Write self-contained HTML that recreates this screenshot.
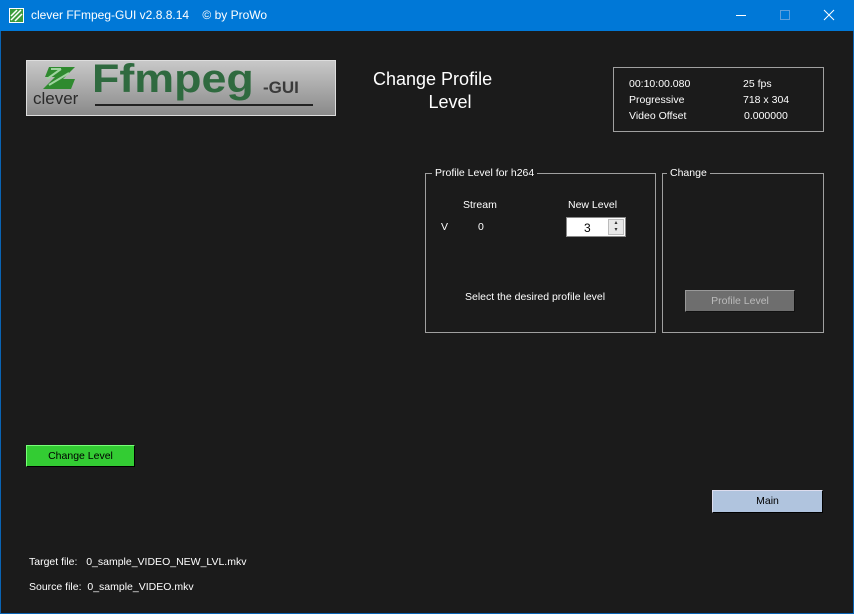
<!DOCTYPE html>
<html><head><style>
*{margin:0;padding:0;box-sizing:border-box}
body{width:854px;height:614px;background:#0a64b4;font-family:"Liberation Sans",sans-serif;font-size:10.5px;color:#fff;position:relative;overflow:hidden}
.t{position:absolute;white-space:nowrap}
#title{position:absolute;left:0;top:0;width:854px;height:31px;background:#0078d7}
#main{position:absolute;left:1px;top:31px;width:852px;height:582px;background:#1b1b1b}
.box{position:absolute;border:1px solid #a0a0a0}
.lg{position:absolute;background:#1b1b1b;padding:0 3px;top:-7px;left:6px}
.btn{position:absolute;text-align:center}
</style></head><body>
<div id="title">
 <svg style="position:absolute;left:9px;top:8px" width="15" height="15"><rect x="0.5" y="0.5" width="14" height="14" fill="#3c9c3c" stroke="#fff"/><path d="M2 8L8 2M2 12L12 2M6 13L13 6" stroke="#fff" stroke-width="1.5"/></svg>
 <div class="t" style="left:31px;top:8px;font-size:12px">clever FFmpeg-GUI v2.8.8.14&nbsp;&nbsp;&nbsp;&nbsp;© by ProWo</div>
 <svg style="position:absolute;left:730px;top:8px" width="110" height="16"><path d="M6 7.5H16" stroke="#fff" stroke-width="1"/><rect x="50.5" y="2.5" width="9" height="9" fill="none" stroke="#5f9fdc"/><path d="M94 2L104 12M104 2L94 12" stroke="#fff" stroke-width="1"/></svg>
</div>
<div id="main">
 <div style="position:absolute;left:25px;top:29px;width:310px;height:56px;border:1px solid #ddd;background:linear-gradient(#c8c8c8,#8a8a8a)">
  <svg style="position:absolute;left:12px;top:4px" width="40" height="28"><path d="M10 2h26l-12 12h12l-4 10H4l12-12H6z" fill="#2f8a2f"/><path d="M12 4L22 4M8 14L22 4M10 20L30 8" stroke="#9fd49f" stroke-width="2"/></svg>
  <div class="t" style="left:6px;top:28px;font-size:17px;color:#2a2a2a">clever</div>
  <div class="t" style="left:65px;top:-4px;font-size:40px;font-weight:bold;color:#2f6a3f;transform:scaleX(1.12);transform-origin:left">Ffmpeg</div>
  <div class="t" style="left:236px;top:17px;font-size:17px;font-weight:bold;color:#3a3a3a">-GUI</div>
  <div style="position:absolute;left:68px;top:43px;width:218px;height:2px;background:#222"></div>
 </div>
 <div class="t" style="left:372px;top:37px;font-size:18px;text-align:center;line-height:23px">Change Profile<br>&nbsp;&nbsp;&nbsp;&nbsp;&nbsp;&nbsp;&nbsp;Level</div>
 <div class="box" style="left:612px;top:36px;width:211px;height:65px">
  <div class="t" style="left:15px;top:10px">00:10:00.080</div>
  <div class="t" style="left:129px;top:10px">25 fps</div>
  <div class="t" style="left:15px;top:26px">Progressive</div>
  <div class="t" style="left:129px;top:26px">718 x 304</div>
  <div class="t" style="left:15px;top:42px">Video Offset</div>
  <div class="t" style="left:130px;top:42px">0.000000</div>
 </div>
 <div class="box" style="left:424px;top:142px;width:231px;height:160px">
  <div class="lg">Profile Level for h264</div>
  <div class="t" style="left:37px;top:25px">Stream</div>
  <div class="t" style="left:142px;top:25px">New Level</div>
  <div class="t" style="left:15px;top:47px">V</div>
  <div class="t" style="left:52px;top:47px">0</div>
  <div style="position:absolute;left:140px;top:43px;width:60px;height:20px;background:#fff;border:1px solid #888;color:#000">
   <div class="t" style="left:17px;top:3px;font-size:12px">3</div>
   <div style="position:absolute;right:1px;top:1px;width:16px;height:16px;background:#e8e8e8;border:1px solid #bbb;font-size:6px;color:#333;line-height:7px;text-align:center">▴<br>▾</div>
  </div>
  <div class="t" style="left:39px;top:117px">Select the desired profile level</div>
 </div>
 <div class="box" style="left:661px;top:142px;width:162px;height:160px">
  <div class="lg" style="left:4px">Change</div>
  <div class="btn" style="left:22px;top:116px;width:110px;height:22px;background:#6e6e6e;border:1px solid #999;border-right-color:#111;border-bottom-color:#111;color:#bbb;line-height:20px">Profile Level</div>
 </div>
 <div class="btn" style="left:25px;top:414px;width:109px;height:22px;background:#33cc33;border:1px solid #7f7;border-right-color:#000;border-bottom-color:#000;color:#000;line-height:20px">Change Level</div>
 <div class="btn" style="left:711px;top:459px;width:111px;height:23px;background:#b0c4de;border:1px solid #dde;border-right-color:#000;border-bottom-color:#000;color:#000;line-height:21px">Main</div>
 <div class="t" style="left:28px;top:525px">Target file:&nbsp;&nbsp;&nbsp;0_sample_VIDEO_NEW_LVL.mkv</div>
 <div class="t" style="left:28px;top:550px">Source file:&nbsp;&nbsp;0_sample_VIDEO.mkv</div>
</div>
</body></html>
